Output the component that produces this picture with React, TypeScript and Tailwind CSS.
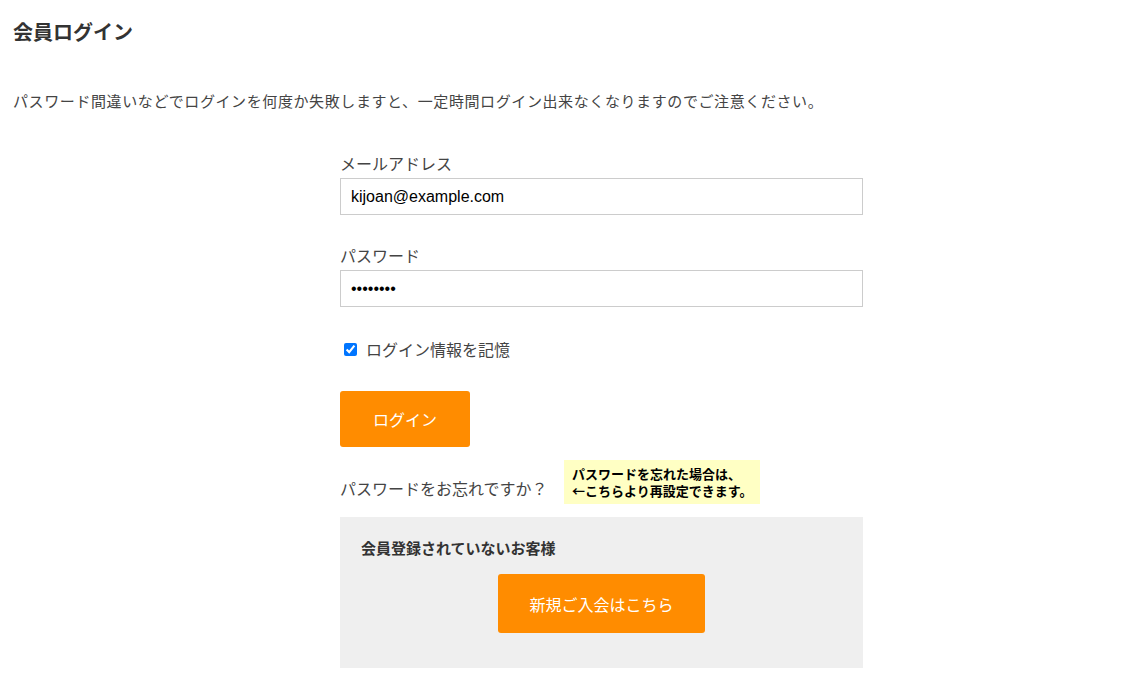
import React, { useState } from 'react';

const jp = { fontFamily: '"Noto Sans CJK JP", "Noto Sans", sans-serif' };

function App() {
    const [email, setEmail] = useState<string>('kijoan@example.com');
    const [password, setPassword] = useState<string>('password');
    const [remember, setRemember] = useState<boolean>(true);

    return (
        <div className="min-h-[678px] bg-white text-[#333]" style={jp}>
            <div className="px-[13px] pt-[18px]">
                <h1 className="text-[20px] font-bold leading-[28px] text-[#333]">会員ログイン</h1>
                <p className="mt-[43px] text-[15px] leading-[24px] tracking-[0.6px] text-[#444]">
                    パスワード間違いなどでログインを何度か失敗しますと、一定時間ログイン出来なくなりますのでご注意ください。
                </p>
            </div>
            <div className="ml-[340px] mt-[38px] w-[523px]">
                <label className="block text-[16px] leading-[24px] text-[#444]">メールアドレス</label>
                <input
                    type="text"
                    value={email}
                    onChange={(e) => setEmail(e.target.value)}
                    className="mt-[3px] block h-[37px] w-full border border-[#ccc] px-[10px] text-[16px] text-black outline-none"
                    style={{ fontFamily: '"Liberation Sans", Arial, sans-serif' }}
                />
                <label className="mt-[28px] block text-[16px] leading-[24px] text-[#444]">パスワード</label>
                <input
                    type="password"
                    value={password}
                    onChange={(e) => setPassword(e.target.value)}
                    className="mt-[3px] block h-[37px] w-full border border-[#ccc] px-[10px] text-[16px] text-black outline-none"
                    style={{ fontFamily: '"Liberation Sans", Arial, sans-serif' }}
                />
                <label className="mt-[30px] flex items-center gap-[9px] pl-[4px] text-[16px] leading-[24px] text-[#444]">
                    <input
                        type="checkbox"
                        checked={remember}
                        onChange={(e) => setRemember(e.target.checked)}
                        className="m-0 h-[13px] w-[13px] accent-[#0075ff]"
                    />
                    ログイン情報を記憶
                </label>
                <button className="mt-[30px] block h-[56px] w-[130px] rounded-[3px] bg-[#ff8c00] text-[16px] text-white">
                    ログイン
                </button>
                <div className="mt-[13px] flex items-center">
                    <span className="mt-[11px] w-[224px] text-[16px] leading-[24px] text-[#444]">パスワードをお忘れですか？</span>
                    <div className="bg-[#ffffc4] px-[8px] py-[5px] text-[13px] font-bold leading-[17px] text-black">
                        パスワードを忘れた場合は、
                        <br />
                        ←こちらより再設定できます。
                    </div>
                </div>
                <div className="mt-[13px] h-[151px] bg-[#efefef] px-[21px] pt-[20px]">
                    <h2 className="text-[15px] font-bold leading-[22px] text-[#333]">会員登録されていないお客様</h2>
                    <div className="mt-[15px] flex justify-center">
                        <button className="h-[59px] w-[207px] rounded-[3px] bg-[#ff8c00] text-[16px] text-white">
                            新規ご入会はこちら
                        </button>
                    </div>
                </div>
            </div>
        </div>
    );
}

export default App;
